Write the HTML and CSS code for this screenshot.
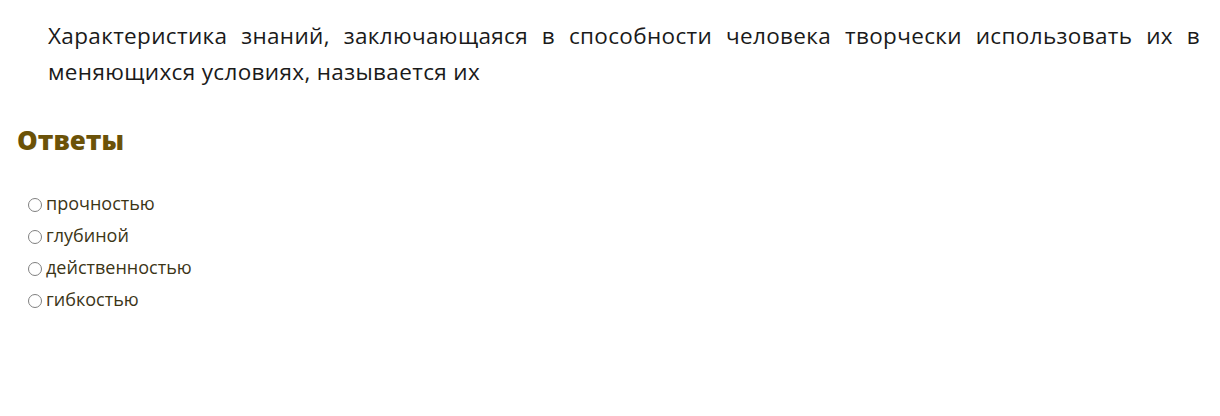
FILE: index.html
```html
<!DOCTYPE html>
<html lang="ru">
<head>
<meta charset="utf-8">
<link rel="stylesheet" href="styles.css">
</head>
<body>
<div class="question">
<p>Характеристика знаний, заключающаяся в способности человека творчески использовать их в меняющихся условиях, называется их</p>
</div>
<h2 class="answers-title">Ответы</h2>
<ul class="answers">
<li><span class="radio"></span><span>прочностью</span></li>
<li><span class="radio"></span><span>глубиной</span></li>
<li><span class="radio"></span><span>действенностью</span></li>
<li><span class="radio"></span><span>гибкостью</span></li>
</ul>
</body>
</html>
```
FILE: styles.css
```css
html, body {
  margin: 0;
  padding: 0;
  background: #fff;
}
body {
  font-family: "Open Sans", "Liberation Sans", sans-serif;
  color: #1a1a1a;
}
.question {
  padding: 18px 20px 0 48px;
}
.question p {
  margin: 0;
  font-size: 22.5px;
  line-height: 36px;
  letter-spacing: 0.35px;
  text-align: justify;
}
.answers-title {
  margin: 33px 0 0 17px;
  font-size: 26px;
  line-height: 34px;
  font-weight: 800;
  color: #6b5208;
}
.answers {
  list-style: none;
  margin: 30px 0 0 28px;
  padding: 0;
}
.answers li {
  display: flex;
  align-items: center;
  gap: 4px;
  height: 32px;
  font-size: 18px;
  color: #3b3517;
}
.radio {
  width: 14px;
  height: 14px;
  border: 1.5px solid #808080;
  border-radius: 50%;
  box-sizing: border-box;
  flex: none;
  margin-top: 3px;
}
```
